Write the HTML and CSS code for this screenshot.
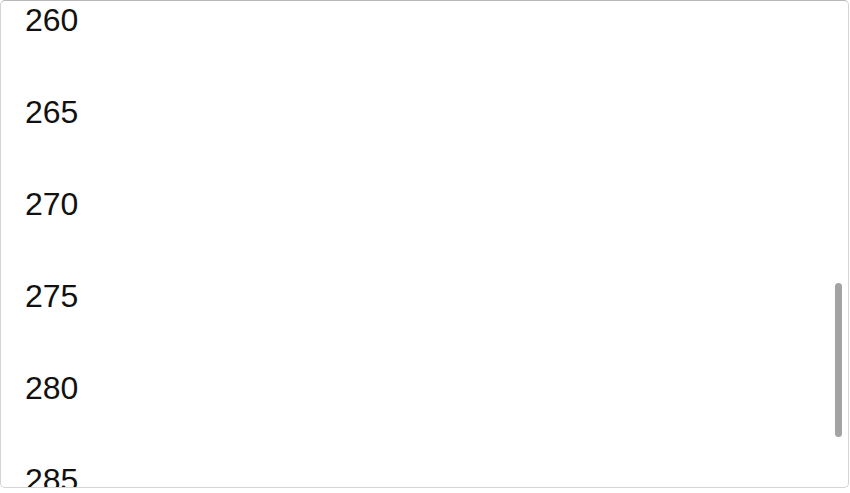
FILE: index.html
```html
<!DOCTYPE html>
<html lang="en">
<head>
    <meta charset="UTF-8">
    <meta name="viewport" content="width=device-width, initial-scale=1.0">
    <title>Number Picker</title>
    <link rel="stylesheet" href="styles.css">
</head>
<body>
    <div class="picker">
        <ul class="picker-list">
            <li>260</li>
            <li>265</li>
            <li>270</li>
            <li>275</li>
            <li>280</li>
            <li>285</li>
        </ul>
        <!-- overlay scrollbar thumb -->
        <div class="scroll-thumb"></div>
    </div>
</body>
</html>
```

FILE: styles.css
```css
body {
    margin: 0;
    background-color: #ffffff;
    font-family: "Liberation Sans", Arial, sans-serif;
}

.picker {
    position: relative;
    width: 847px;
    height: 486px;
    border: 1px solid #d4d4d4;
    border-top-color: #b8b8b8;
    border-radius: 5px;
    overflow: hidden;
    background-color: #ffffff;
}

.picker-list {
    list-style-type: none;
    margin: -27px 0 0 0;
    padding: 0 0 0 24px;
}

.picker-list li {
    height: 92px;
    line-height: 92px;
    font-size: 32px;
    color: #111111;
}

.scroll-thumb {
    position: absolute;
    top: 282px;
    right: 6px;
    width: 7px;
    height: 154px;
    border-radius: 4px;
    background-color: #a3a3a3;
}
```
